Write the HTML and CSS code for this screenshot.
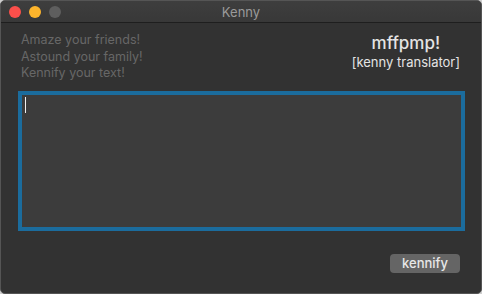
FILE: index.html
```html
<!DOCTYPE html>
<html>
<head>
  <title>Kenny</title>
  <link rel="stylesheet" href="styles.css">
</head>
<body>

  <div class="window">
    <div class="titlebar">
      <div class="lights">
        <span class="light red"></span>
        <span class="light yellow"></span>
        <span class="light gray"></span>
      </div>
      <div class="title">Kenny</div>
    </div>

    <div class="content">
      <div class="header">
        <div class="taglines">
          <div>Amaze your friends!</div>
          <div>Astound your family!</div>
          <div>Kennify your text!</div>
        </div>
        <div class="brand">
          <div class="brand-name">mffpmp!</div>
          <div class="brand-sub">[kenny translator]</div>
        </div>
      </div>

      <div class="input-box">
        <span class="caret"></span>
      </div>

      <div class="actions">
        <button>kennify</button>
      </div>
    </div>
  </div>

</body>
</html>
```

FILE: styles.css
```css
html, body {
  margin: 0;
  background: #cfcfcf;
}
body {
  font-family: 'Inter', 'Noto Sans', sans-serif;
  width: 482px;
  height: 294px;
}
.window {
  box-sizing: border-box;
  width: 482px;
  height: 294px;
  background: #323232;
  border: 1px solid #555;
  border-radius: 5px;
  overflow: hidden;
  display: flex;
  flex-direction: column;
}
.titlebar {
  height: 21px;
  background: linear-gradient(to bottom, #3e3e3e, #383838);
  border-bottom: 1px solid #1e1e1e;
  display: flex;
  align-items: center;
  position: relative;
}
.lights {
  display: flex;
  gap: 8px;
  padding-left: 8px;
}
.light {
  width: 12px;
  height: 12px;
  border-radius: 50%;
}
.red { background: #fc4f4b; }
.yellow { background: #fdb52c; }
.gray { background: #5e5e5e; }
.title {
  position: absolute;
  left: 0;
  right: 0;
  text-align: center;
  font-size: 13px;
  color: #9a9a9a;
}
.content {
  flex: 1;
  display: flex;
  flex-direction: column;
  padding: 9px 16px 0 17px;
}
.header {
  display: flex;
  justify-content: space-between;
  align-items: flex-start;
}
.taglines {
  padding-left: 3px;
  font-size: 12.5px;
  line-height: 16.5px;
  color: #676767;
}
.brand {
  text-align: center;
  padding-right: 5px;
  color: #e4e4e4;
}
.brand-name {
  font-size: 17px;
  font-weight: 500;
  line-height: 22px;
}
.brand-sub {
  font-size: 13px;
  line-height: 16px;
}
.input-box {
  margin-top: 9px;
  height: 140px;
  box-sizing: border-box;
  border: 4px solid #1b6c9d;
  background: #3c3c3c;
  padding: 2px 3px;
}
.caret {
  display: block;
  width: 1px;
  height: 16px;
  background: #f0f0f0;
}
.actions {
  display: flex;
  justify-content: flex-end;
  padding: 23px 5px 0 0;
}
button {
  font-family: 'Inter', 'Noto Sans', sans-serif;
  width: 70px;
  height: 19px;
  padding: 0;
  font-size: 13px;
  font-weight: 500;
  color: #e8e8e8;
  background: #656565;
  border: none;
  border-radius: 4px;
}
```
